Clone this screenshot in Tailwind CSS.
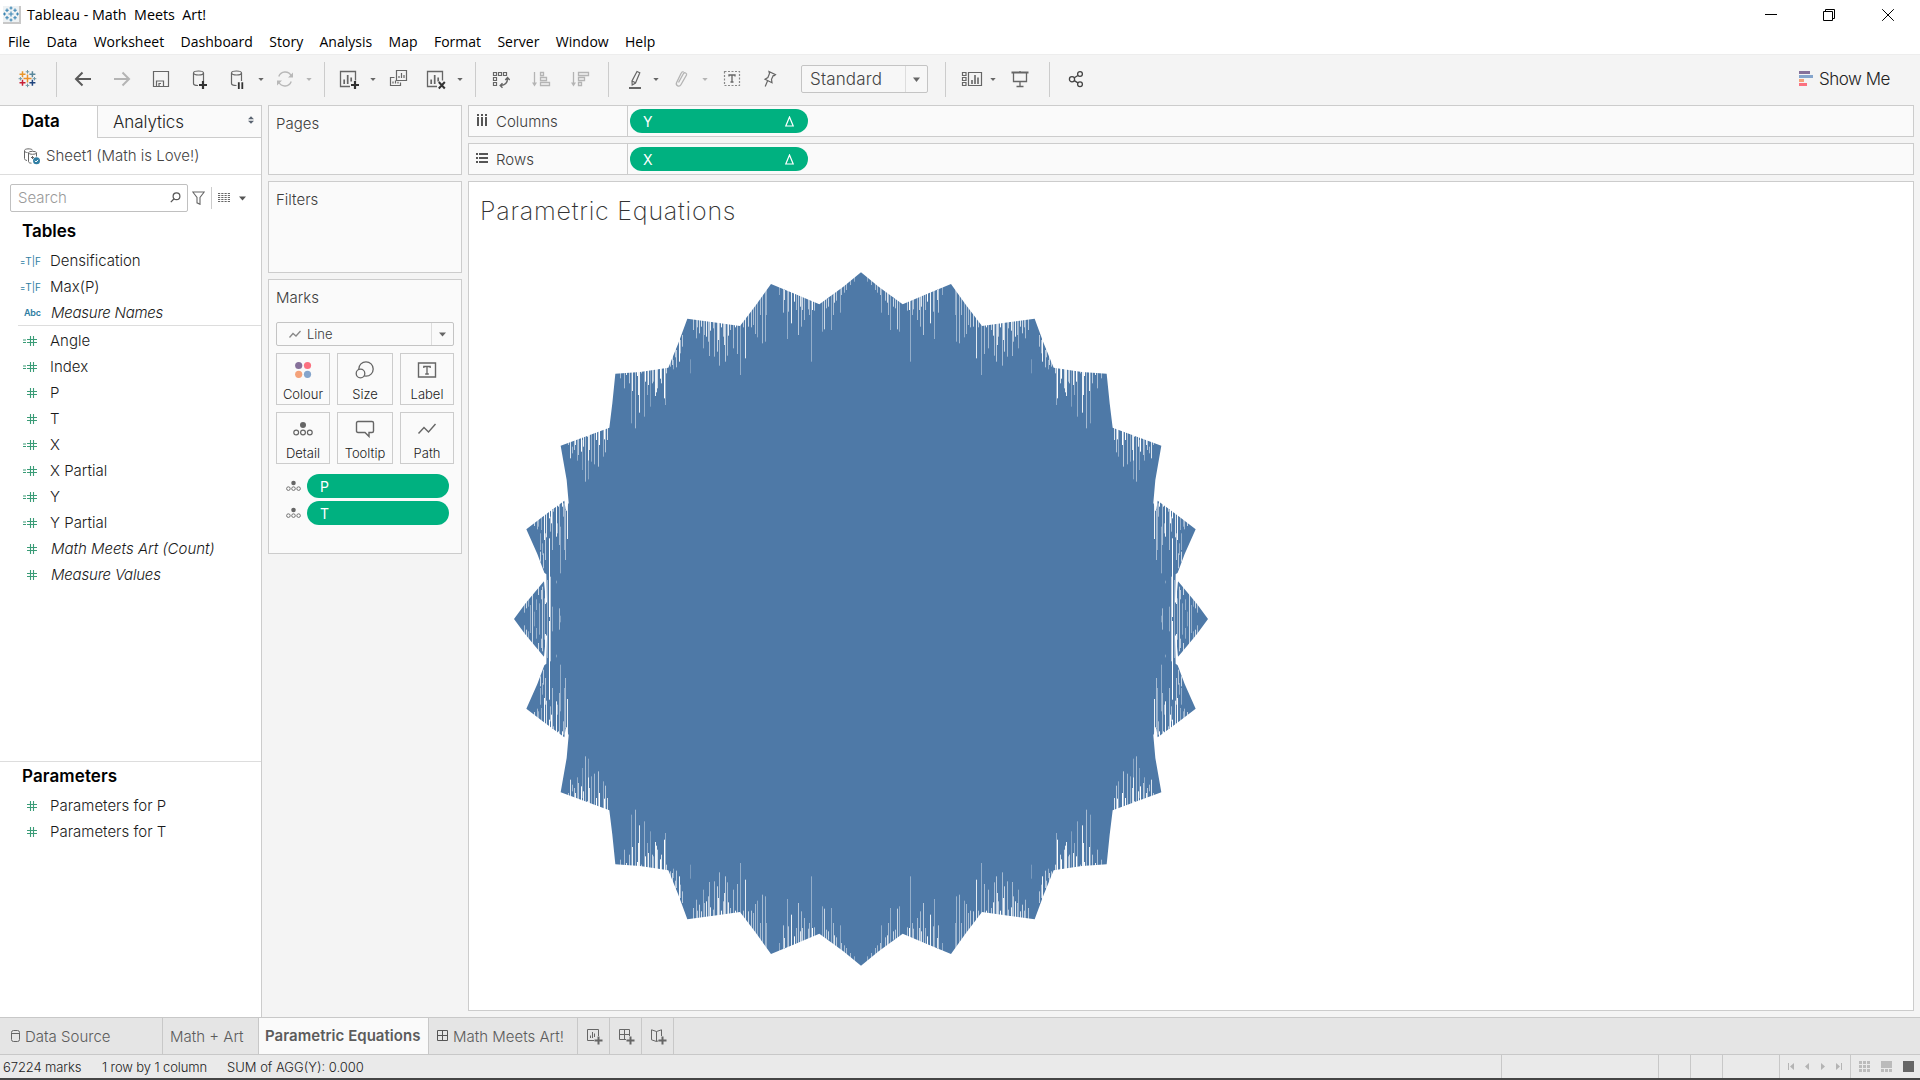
<!DOCTYPE html>
<html lang="en">
<head>
<meta charset="utf-8">
<title>Tableau - Math Meets Art!</title>
<script src="https://cdn.jsdelivr.net/npm/@tailwindcss/browser@4"></script>
</head>
<body class="w-[1920px] h-[1080px] overflow-hidden flex flex-col bg-[#f4f4f4] font-['Inter',sans-serif] font-light text-[15px] text-[#1e1e1e] whitespace-nowrap">

<svg class="hidden">
  <symbol id="caret" viewBox="0 0 6 24"><path d="M.3 11h5.4L3 14z" fill="currentColor"/></symbol>
  <symbol id="num" viewBox="0 0 16 12"><path d="M8.500 1v10M11.500 1v10M5 4.500h10M5 7.500h10" stroke="#3a9c77" stroke-width="1.100"/></symbol>
  <symbol id="calcnum" viewBox="0 0 16 12"><path d="M8.500 1v10M11.500 1v10M5 4.500h10M5 7.500h10M1 5h3M1 7.500h3" stroke="#3a9c77" stroke-width="1.100"/></symbol>
  <symbol id="detail" viewBox="0 0 20 16"><circle cx="10" cy="4" r="3" fill="#666"/><g fill="none" stroke="#666" stroke-width="1.200"><circle cx="3.200" cy="11.500" r="2.400"/><circle cx="10" cy="11.500" r="2.400"/><circle cx="16.800" cy="11.500" r="2.400"/></g></symbol>
</svg>

<!-- Title bar -->
<header class="h-[29px] shrink-0 bg-white flex items-center pl-[3px] font-['Open_Sans',sans-serif] font-normal text-[14.3px] text-black">
  <div class="size-[18px] bg-[#eef2f4] border-r-2 border-b-2 border-[#c8c8c8] shrink-0 mt-px">
    <svg class="size-4" viewBox="0 0 16 16" stroke="#3c86b4" stroke-width="1.100"><path d="M8 5.500v5M5.500 8h5M4 2.500v3.500M2.300 4.200h3.500M12 2.500v3.500M10.300 4.200h3.500M4 10v3.500M2.300 11.800h3.500M12 10v3.500M10.300 11.800h3.500M8 .5v3M6.500 2h3M8 12.500v3M6.500 14h3M1.500 6.500v3M0 8h3M14.500 6.500v3M13 8h3"/></svg>
  </div>
  <span class="ml-[6px] whitespace-pre">Tableau - Math  Meets  Art!</span>
  <svg class="ml-auto mr-[25px] w-[131px] h-[14px]" viewBox="0 0 131 14" fill="none" stroke="#000" stroke-width="1"><path d="M1 6.500h12M59.500 3.500h9v9h-9zM61.500 3.500v-2h9v9h-2"/><path d="M118.200 1.200l11.600 11.600M129.800 1.200l-11.600 11.600"/></svg>
</header>

<!-- Menu bar -->
<nav class="h-[25px] shrink-0 bg-white flex items-center pl-2 gap-[16.300px] font-['Open_Sans',sans-serif] font-normal text-[14px] text-black tracking-[0.02px]">
  <span>File</span><span>Data</span><span>Worksheet</span><span>Dashboard</span><span>Story</span><span>Analysis</span><span>Map</span><span>Format</span><span>Server</span><span>Window</span><span>Help</span>
</nav>

<!-- Toolbar -->
<div class="h-[51px] shrink-0 border-t border-[#ededed] flex items-center text-[#666] [&>svg]:shrink-0 [&>svg]:h-6 [&>i]:w-px [&>i]:h-[35px] [&>i]:bg-[#ccc] [&>i]:shrink-0 pb-[2px]">
  <svg class="ml-[17px] w-5" viewBox="0 0 20 24" stroke-width="1.500">
    <path d="M10.500 7.500v8M6.500 11.500h8" stroke="#eb912b"/><path d="M5.500 4.200v6M2.500 7.200h6" stroke="#e8962c"/><path d="M15.400 4.200v6M12.400 7.200h6" stroke="#59879b"/><path d="M5.500 12.800v6M2.500 15.800h6" stroke="#c72037"/><path d="M15.400 12.800v6M12.400 15.800h6" stroke="#1f447e"/>
    <path d="M10.500 3v3.600M8.700 4.800h3.600M10.500 16.600v3.600M8.700 18.400h3.600M3.400 10v3.400M1.600 11.700h3.600M17.500 10v3.400M15.700 11.700h3.600" stroke="#7199a6" stroke-width="1"/>
  </svg>
  <i class="ml-[19px]"></i>
  <svg class="ml-[17px] w-[18px]" viewBox="0 0 18 24" fill="none" stroke="#5a5a5a" stroke-width="2"><path d="M17 12H2.500M8.500 5.500L2 12l6.500 6.500"/></svg>
  <svg class="ml-[21px] w-[18px]" viewBox="0 0 18 24" fill="none" stroke="#b4b4b4" stroke-width="2"><path d="M1 12h14.500M9.500 5.500L16 12l-6.500 6.500"/></svg>
  <svg class="ml-[21px] w-[18px]" viewBox="0 0 18 24" fill="none" stroke="#666" stroke-width="1.200"><path d="M1.500 4.500h15v15h-15zM4.500 19.500v-5.500h7v5.500M7 19v-2.500h2"/></svg>
  <svg class="ml-[22px] w-4" viewBox="0 0 16 24" fill="none" stroke="#666" stroke-width="1.200"><ellipse cx="6.500" cy="6" rx="5" ry="2"/><path d="M1.500 6v10.500c0 1.200 2 2 4.500 2M11.500 6v8"/><path d="M11 14v8M7 18h8" stroke="#333" stroke-width="2.200"/></svg>
  <svg class="ml-[22px] w-[14px]" viewBox="0 0 14 24" fill="none" stroke="#666" stroke-width="1.200"><ellipse cx="6.500" cy="6" rx="5" ry="2"/><path d="M1.500 6v10.500c0 1.200 2 2 5 2M11.500 6v8"/><path d="M8.800 15.300v6.700M12.300 15.300v6.700" stroke="#333" stroke-width="1.800"/></svg>
  <svg class="ml-[14px] w-1.5"><use href="#caret"/></svg>
  <svg class="ml-3 w-[18px]" viewBox="0 0 18 24" fill="none" stroke="#b8b8b8" stroke-width="1.400"><path d="M2.800 9.500a6.700 6.700 0 0 1 12.300-.8M15.200 14.500a6.700 6.700 0 0 1-12.300.8"/><path d="M17 5.500v5h-5zM1 18.500v-5h5z" fill="#b8b8b8" stroke="none"/></svg>
  <svg class="ml-3 w-1.5 text-[#b4b4b4]"><use href="#caret"/></svg>
  <i class="ml-3"></i>
  <svg class="ml-[14px] w-5" viewBox="0 0 20 24" fill="none" stroke="#666" stroke-width="1.300"><path d="M11 19.500H1.500v-15h15v9"/><path d="M5.200 12.500v4.500M8.700 8v9M12.200 10.500v4" stroke-width="1.700"/><path d="M16 14v8M12 18h8" stroke="#333" stroke-width="2.200"/></svg>
  <svg class="ml-[11px] w-1.5"><use href="#caret"/></svg>
  <svg class="ml-[13px] w-[19px]" viewBox="0 0 19 24" fill="none" stroke="#666" stroke-width="1.200"><path d="M7.500 3.500h10v10h-10zM5.500 10.500h-4v8h10v-3M10 11V9M12.500 11V6M15 11V8M4 16.500v-2M6.500 16.500v-3M9 16.500V14.800"/></svg>
  <svg class="ml-[18px] w-5" viewBox="0 0 20 24" fill="none" stroke="#666" stroke-width="1.300"><path d="M11 19.500H1.500v-15h15v9"/><path d="M5.200 12.500v4.500M8.700 8v9M12.200 10.500v4" stroke-width="1.700"/><path d="M12.800 15l6 6.500M18.800 15l-6 6.500" stroke="#333" stroke-width="2"/></svg>
  <svg class="ml-[11px] w-1.5"><use href="#caret"/></svg>
  <i class="ml-3"></i>
  <svg class="ml-4 w-[18px]" viewBox="0 0 18 24" fill="none" stroke="#666" stroke-width="1.200"><path d="M1.500 5.500h3v3h-3zM6.500 5.500h3v3h-3zM11.500 5.500h3v3h-3zM1.500 10.500h3v3h-3zM1.500 15.500h3v3h-3z"/><path d="M15.500 11c.2 5-2.500 7.200-7 7.500M13.300 13l2.200-2.500 2.200 2.500M10.500 16.200L8.200 18.500l2.300 2.300" stroke-width="1.400"/></svg>
  <svg class="ml-[21px] w-5" viewBox="0 0 20 24" fill="none" stroke="#b4b4b4" stroke-width="1.300"><path d="M3.500 5v12M9.500 5.500h3v3h-3zM9.500 10.500h6v3h-6zM9.500 15.500h9v3h-9z"/><path d="M1 15.500h5l-2.500 4z" fill="#b4b4b4" stroke="none"/></svg>
  <svg class="ml-[19px] w-5" viewBox="0 0 20 24" fill="none" stroke="#b4b4b4" stroke-width="1.300"><path d="M3.500 5v12M8.500 5.500h10v3h-10zM8.500 10.500h6v3h-6zM8.500 15.500h3v3h-3z"/><path d="M1 15.500h5l-2.500 4z" fill="#b4b4b4" stroke="none"/></svg>
  <i class="ml-[18px]"></i>
  <svg class="ml-[19px] w-[14px]" viewBox="0 0 14 24" fill="none" stroke="#666" stroke-width="1.200"><path d="M9 4.500l2.800 1.300L7.500 16l-3.300 2-.2-4zM4 14l3.500 1.800"/><path d="M1 21h12" stroke-width="2"/></svg>
  <svg class="ml-[11px] w-1.5"><use href="#caret"/></svg>
  <svg class="ml-[15px] w-[14px]" viewBox="0 0 14 24" fill="none" stroke="#b4b4b4" stroke-width="1.300"><path d="M4.500 15.500l5-9c.9-1.500 3.800-.4 3 1.500l-5.600 9.800c-1.500 2.500-5.500.8-4.400-2L7 6.500c.7-1.500 1.600-1.800 2.600-1.800"/></svg>
  <svg class="ml-[14px] w-1.5 text-[#b4b4b4]"><use href="#caret"/></svg>
  <svg class="ml-[15px] w-[18px]" viewBox="0 0 18 24" fill="none"><path d="M1.500 4.500h15v14h-15z" stroke="#888" stroke-width="1.200" stroke-dasharray="2 1.500"/><path d="M6 9.500V8h6v1.500M9 8v7M7.500 15h3" stroke="#666" stroke-width="1.300"/></svg>
  <svg class="ml-[21px] w-[15px]" viewBox="0 0 15 24" fill="none" stroke="#666" stroke-width="1.200"><path d="M7 4.500l6.500 3.200-1.200 1-1.100 0-1.700 3.600.5 3.400-7-3.400 2.900-1.800L7.500 6.500zM5.500 14L3.200 19.500"/></svg>
  <div class="ml-6 w-[127px] h-7 shrink-0 border border-[#c4c4c4] rounded-[2px] bg-[#f7f7f7] flex items-center text-[17px] text-[#444] tracking-[0.15px]">
    <span class="pl-2 w-[103px] pt-px">Standard</span><span class="w-px h-[26px] bg-[#ddd]"></span>
    <svg class="ml-[7px] w-[7px] h-[5px]" viewBox="0 0 7 5"><path d="M0 .5h7L3.500 5z" fill="#666"/></svg>
  </div>
  <i class="ml-[17px]"></i>
  <svg class="ml-[15px] w-[22px]" viewBox="0 0 22 24" fill="none" stroke="#666" stroke-width="1.200"><path d="M1.500 5.500h3.500v3H1.500zM1.500 10.500h3.500v3H1.500zM1.500 15.500h3.500v3H1.500zM7.500 5.500h13v13h-13z"/><path d="M11 13v4M14 8v9M17 10.500v6.500" stroke-width="1.600"/></svg>
  <svg class="ml-[7px] w-1.5"><use href="#caret"/></svg>
  <svg class="ml-[15px] w-[18px]" viewBox="0 0 18 24" fill="none" stroke="#666" stroke-width="1.300"><path d="M.5 5.500h17" stroke-width="2"/><path d="M2.500 6v8.500h13V6M9 4v1M9 14.500v5M5.500 19.500h7"/></svg>
  <i class="ml-5"></i>
  <svg class="ml-[18px] w-4" viewBox="0 0 16 24" fill="none" stroke="#444" stroke-width="1.300"><circle cx="4" cy="12.200" r="2.600"/><circle cx="12" cy="7" r="2.400"/><circle cx="12" cy="17.200" r="2.400"/><path d="M6.300 10.800l3.600-2.300M6.300 13.600l3.600 2.300"/></svg>
  <svg class="ml-auto w-[14px]" viewBox="0 0 14 24"><path d="M0 4h11v3H0z" fill="#86719a"/><path d="M0 8h14v3H0z" fill="#85a5cc"/><path d="M0 12h5v3H0z" fill="#f4a27a"/><path d="M0 16h8v3H0z" fill="#fb7180"/></svg>
  <span class="ml-[6px] w-[101px] text-[17px] text-[#222] tracking-[-0.5px] pt-px">Show Me</span>
</div>

<!-- Workspace -->
<main class="flex h-[912px] shrink-0">

  <!-- Data pane -->
  <aside class="w-[262px] shrink-0 bg-white border-t border-r border-[#ccc] flex flex-col">
    <div class="flex h-8 text-[17px]">
      <div class="w-[97px] pl-[22px] pt-[3px] font-semibold text-black">Data</div>
      <div class="flex-1 bg-[#fafafa] border-l border-b border-[#ccc] pl-[15px] pr-[7px] flex items-center justify-between"><span class="tracking-[-0.1px] pt-[2px]">Analytics</span>
        <svg class="w-[6px] h-[8px] -mt-1" viewBox="0 0 6 8"><path d="M0 3.200h6L3 .2zM0 4.800h6L3 7.800z" fill="#5a6472"/></svg></div>
    </div>
    <div class="h-[37px] border-b border-[#ddd] flex items-center pl-6 text-[#444]">
      <svg class="w-4 h-[17px] mr-[6px]" viewBox="0 0 16 17" fill="none" stroke="#666" stroke-width="1"><path d="M8.500 2C7 .3.500.5.500 2.500v8c0 1.200 1 1.700 2.500 2M.5 3c.5 1.200 1.500 1.500 3 1.600"/><ellipse cx="8.500" cy="4.800" rx="4" ry="1.500"/><path d="M4.500 5v8.500c0 1 1 1.600 3 1.700M12.500 5v3.500M7 9.500h3M8.500 8v3"/><circle cx="12.500" cy="12.800" r="3.500" fill="#2f7ea3" stroke="none"/><path d="M10.900 12.800l1.200 1.200 2-2.200" stroke="#fff"/></svg>
      <span class="pt-px">Sheet1 (Math is Love!)</span>
    </div>
    <div class="flex items-center mt-[9px] ml-[10px] h-7">
      <div class="w-[178px] h-7 border border-[#c0c0c0] rounded-[2px] flex items-center justify-between pl-[7px] pr-[6px] text-[#9a9a9a]"><span>Search</span>
        <svg class="size-[11px] -mt-0.5" viewBox="0 0 11 11" fill="none" stroke="#555" stroke-width="1.200"><circle cx="6.500" cy="4.300" r="3.400"/><path d="M3.800 7L.8 10.200"/></svg></div>
      <svg class="ml-1 w-[13px] h-[14px]" viewBox="0 0 13 14" fill="none" stroke="#666" stroke-width="1.100"><path d="M.8 1h11.400L8 6.500v6.800l-3-1.500V6.500z"/></svg>
      <span class="ml-[6px] w-px h-[22px] bg-[#ccc]"></span>
      <svg class="ml-[6px] w-3 h-[10px]" viewBox="0 0 12 10" stroke="#666" stroke-width="1"><path d="M0 .5h12M0 2.500h12M0 4.500h12M0 6.500h12M0 8.500h12" stroke-dasharray="2.200 1.066"/></svg>
      <svg class="ml-[9px] w-[7px] h-[5px]" viewBox="0 0 7 5"><path d="M0 .5h7L3.500 4.500z" fill="#555"/></svg>
    </div>
    <h2 class="mt-[6px] pl-[22px] h-[26px] leading-[27px] text-[17px] font-semibold text-black">Tables</h2>
    <div class="mt-1 text-[#1a1a1a] [&>div]:flex [&>div]:items-center [&>div]:h-[26px]">
      <div><span class="w-[50px] pl-5 text-[10px] font-normal text-[#2f7ea3]"><span class="text-[8px]">=</span>T|F</span>Densification</div>
      <div><span class="w-[50px] pl-5 text-[10px] font-normal text-[#2f7ea3]"><span class="text-[8px]">=</span>T|F</span>Max(P)</div>
      <div class="italic tracking-[-0.25px]"><span class="w-[51px] pl-6 not-italic text-[9px] font-semibold text-[#2f7ea3] tracking-[-0.2px]">Abc</span>Measure Names</div>
    </div>
    <div class="ml-[18px] -mt-px h-px bg-[#ddd]"></div>
    <div class="mt-[2px] text-[#1a1a1a] [&>div]:flex [&>div]:items-center [&>div]:h-[26px] [&_svg]:w-4 [&_svg]:h-3 [&_svg]:ml-[22px] [&_svg]:mr-3">
      <div><svg><use href="#calcnum"/></svg>Angle</div>
      <div><svg><use href="#calcnum"/></svg>Index</div>
      <div><svg><use href="#num"/></svg>P</div>
      <div><svg><use href="#num"/></svg>T</div>
      <div><svg><use href="#calcnum"/></svg>X</div>
      <div><svg><use href="#calcnum"/></svg>X Partial</div>
      <div><svg><use href="#calcnum"/></svg>Y</div>
      <div><svg><use href="#calcnum"/></svg>Y Partial</div>
      <div class="italic"><svg><use href="#num"/></svg><span class="pl-px">Math Meets Art (Count)</span></div>
      <div class="italic tracking-[-0.200px]"><svg><use href="#num"/></svg><span class="pl-px">Measure Values</span></div>
    </div>
    <div class="mt-auto h-[256px] border-t border-[#ddd] text-[#1a1a1a]">
      <h2 class="pl-[22px] h-[31px] leading-[29px] text-[17px] font-semibold text-black tracking-[0.1px]">Parameters</h2>
      <div class="flex items-center h-[26px]"><svg class="w-4 h-3 ml-[22px] mr-3"><use href="#num"/></svg>Parameters for P</div>
      <div class="flex items-center h-[26px]"><svg class="w-4 h-3 ml-[22px] mr-3"><use href="#num"/></svg>Parameters for T</div>
    </div>
  </aside>

  <!-- Cards -->
  <section class="w-[194px] ml-[6px] shrink-0 flex flex-col gap-[6px] text-[#3c3c3c]">
    <div class="h-[70px] border border-[#ccc] bg-[#fafafa] pl-[7px] pt-[7px]">Pages</div>
    <div class="h-[92px] border border-[#ccc] bg-[#fafafa] pl-[7px] pt-[7px]">Filters</div>
    <div class="h-[275px] border border-[#ccc] bg-[#fafafa] pl-[7px] pt-[6px]">
      <div class="leading-6">Marks</div>
      <div class="mt-3 w-[178px] h-6 border border-[#c4c4c4] rounded-[2px] flex items-center text-[13px]">
        <svg class="ml-3 w-3 h-[9px]" viewBox="0 0 12 9" fill="none" stroke="#888" stroke-width="1.300"><path d="M.5 7.500l3.500-4 3 2.500 4.500-5"/></svg>
        <span class="ml-[6px] w-[124px] pt-px">Line</span><span class="w-px h-[22px] bg-[#ddd]"></span>
        <svg class="ml-[7px] w-[7px] h-[5px]" viewBox="0 0 7 5"><path d="M0 .5h7L3.500 4.500z" fill="#666"/></svg>
      </div>
      <div class="mt-[7px] grid grid-cols-[54px_56px_54px] gap-x-[7px] gap-y-[7px] text-[13px] text-[#222] [&>div]:h-[52px] [&>div]:border [&>div]:border-[#ccc] [&>div]:flex [&>div]:flex-col [&>div]:items-center [&>div]:pt-[7px] [&_svg]:w-5 [&_svg]:h-[18px] [&_svg]:mb-[5px] leading-5">
        <div><svg viewBox="0 0 20 18"><circle cx="5.700" cy="4.500" r="3.600" fill="#86719a"/><circle cx="14.500" cy="4.500" r="3.600" fill="#fb7180"/><circle cx="5.700" cy="13.300" r="3.600" fill="#f4a27a"/><circle cx="14.500" cy="13.300" r="3.600" fill="#85a5cc"/></svg>Colour</div>
        <div><svg viewBox="0 0 20 18" fill="none" stroke="#666" stroke-width="1.300"><circle cx="11" cy="8" r="7.200"/><circle cx="5.500" cy="12.500" r="4.300" fill="#fafafa"/></svg>Size</div>
        <div><svg viewBox="0 0 20 18" fill="none" stroke="#666" stroke-width="1.400"><path d="M1.500 2h17v14h-17z"/><path d="M6.800 7V5.500h6.400V7M10 5.500v7.500M8.200 13h3.600" stroke-width="1.300"/></svg>Label</div>
        <div><svg viewBox="0 0 20 18"><use href="#detail" y="1" width="20" height="16"/></svg>Detail</div>
        <div><svg viewBox="0 0 20 18" fill="none" stroke="#666" stroke-width="1.400"><path d="M3 1.500h14q1.500 0 1.500 1.500v8q0 1.500-1.500 1.500h-3v4l-4-4H3q-1.500 0-1.500-1.500V3Q1.500 1.500 3 1.500z"/></svg>Tooltip</div>
        <div><svg viewBox="0 0 20 18" fill="none" stroke="#666" stroke-width="1.400"><path d="M1.500 13.500l5.500-6 4.500 4.500 7-8"/></svg>Path</div>
      </div>
      <div class="mt-[10px] flex flex-col gap-[3px] pl-[10px] text-white font-normal text-[14px] [&>div]:flex [&>div]:items-center [&_svg]:w-[15px] [&_svg]:h-3 [&_span]:ml-[6px] [&_span]:w-[142px] [&_span]:h-6 [&_span]:rounded-full [&_span]:bg-[#00b180] [&_span]:pl-[13px] leading-[25px]">
        <div><svg><use href="#detail"/></svg><span>P</span></div>
        <div><svg><use href="#detail"/></svg><span>T</span></div>
      </div>
    </div>
  </section>

  <!-- Shelves and view -->
  <section class="w-[1446px] ml-[6px] shrink-0 flex flex-col gap-[6px] text-[#3c3c3c]">
    <div class="h-8 border border-[#ccc] bg-[#fafafa] flex items-center">
      <svg class="ml-[7px] size-3 -mt-0.5" viewBox="0 0 12 12" fill="#555"><path d="M1 0h2v2H1zM5 0h2v2H5zM9 0h2v2H9zM1 3h2v9H1zM5 3h2v9H5zM9 3h2v9H9z"/></svg>
      <span class="ml-2 w-[131px] pt-[2px]">Columns</span><span class="w-px h-[30px] bg-[#ccc]"></span>
      <div class="ml-[2px] w-[178px] h-6 rounded-full bg-[#00b180] text-white font-normal text-[14px] flex items-center justify-between pl-[13px] pr-[14px]">Y<svg class="w-[9px] h-[11px]" viewBox="0 0 9 11" fill="none" stroke="#fff" stroke-width="1.200"><path d="M4.500 1L8.200 10H.8z"/></svg></div>
    </div>
    <div class="h-8 border border-[#ccc] bg-[#fafafa] flex items-center">
      <svg class="ml-[7px] size-3 -mt-0.5" viewBox="0 0 12 12" fill="#555"><path d="M0 1h2v2H0zM0 5h2v2H0zM0 9h2v2H0zM3 1h9v2H3zM3 5h9v2H3zM3 9h9v2H3z"/></svg>
      <span class="ml-2 w-[131px] pt-[2px]">Rows</span><span class="w-px h-[30px] bg-[#ccc]"></span>
      <div class="ml-[2px] w-[178px] h-6 rounded-full bg-[#00b180] text-white font-normal text-[14px] flex items-center justify-between pl-[13px] pr-[14px]">X<svg class="w-[9px] h-[11px]" viewBox="0 0 9 11" fill="none" stroke="#fff" stroke-width="1.200"><path d="M4.500 1L8.200 10H.8z"/></svg></div>
    </div>
    <div class="h-[830px] border border-[#ccc] bg-white">
      <h1 class="h-[58px] leading-[59px] pl-[11px] text-[25px] font-extralight tracking-[0.780px] text-[#333]">Parametric Equations</h1>
      <svg class="ml-[45px] mt-[31px] w-[694px] h-[696px]" viewBox="514 271 694 696">
        <defs><g id="quarter"><path fill="#4e79a7" d="M42 1137L75 1092L128 1028L132 1024L136 1065L138 1090L141 1085L139 1003L133 998L112 942L79 868L128 830L193 782L197 810L206 788L200 720L182 617L245 594L328 563L337 490L346 401L420 396L505 383L535 310L562 236L640 247L720 258L768 195L813 132L880 160L958 193L1030 140L1083 97V1137H42z"/></g></defs>
        <use href="#quarter" transform="translate(500 240) scale(.333333)"/>
        <use href="#quarter" transform="translate(1222 240) scale(-.333333 .333333)"/>
        <use href="#quarter" transform="translate(500 998) scale(.333333 -.333333)"/>
        <use href="#quarter" transform="translate(1222 998) scale(-.333333)"/>
      </svg>
    </div>
  </section>
</main>

<!-- Sheet tabs -->
<div class="h-[38px] shrink-0 border-y border-[#c8c8c8] bg-[#e5e5e5] flex text-[#5c5c5c] [&>div]:border-r [&>div]:border-[#c8c8c8] [&>div]:flex [&>div]:items-center [&>div]:h-9 [&>div]:pt-[2px]">
  <div class="w-[163px] pl-[11px]"><svg class="w-[9px] h-3 mr-[5px] -mt-[3px]" viewBox="0 0 9 12" fill="none" stroke="#666"><rect x=".5" y=".5" width="8" height="11" rx="2"/><path d="M.5 3.500h8"/></svg>Data Source</div>
  <div class="w-24 pl-[7px]">Math + Art</div>
  <div class="w-[170px] pl-[6px] bg-[#fafafa] font-semibold pb-[2px] tracking-[0.03px]">Parametric Equations</div>
  <div class="w-[149px] pl-2"><svg class="size-[11px] mr-[5px] -mt-[3px]" viewBox="0 0 11 11" fill="none" stroke="#555"><path d="M.5.5h10v10H.5zM5.500.5v10M.5 5.500h10"/></svg>Math Meets Art!</div>
  <div class="w-8 pl-[9px]"><svg class="w-4 h-4" viewBox="0 0 16 16" fill="none" stroke="#666"><path d="M7 11.500H.5V.5h11V7M3.500 9V6.500M5.500 9V3M7.500 8V4.500"/><path d="M11.500 7.500v8M7.500 11.500h8" stroke-width="2"/></svg></div>
  <div class="w-8 pl-[9px]"><svg class="w-4 h-4" viewBox="0 0 16 16" fill="none" stroke="#666"><path d="M7 10.500H.5V.5h10V7M5.500.5v10M.5 5.500h10"/><path d="M11.500 7.500v8M7.500 11.500h8" stroke-width="2"/></svg></div>
  <div class="w-8 pl-[9px]"><svg class="w-4 h-4" viewBox="0 0 16 16" fill="none" stroke="#666"><path d="M10.500 7V.8L5.500 2.500.5.8v10l5 1.700V2.500M5.500 12.500l2-.7"/><path d="M11.500 7.500v8M7.500 11.500h8" stroke-width="2"/></svg></div>
</div>

<!-- Status bar -->
<footer class="h-[25px] shrink-0 bg-[#eaeaea] border-b-2 border-[#454545] flex items-center text-[13px] text-[#222]">
  <span class="pl-[3px] w-[102px] tracking-[-0.1px] pt-[2px]">67224 marks</span><span class="w-[125px] tracking-[-0.1px] pt-[2px]">1 row by 1 column</span><span class="w-[1274px] pt-[2px]">SUM of AGG(Y): 0.000</span>
  <span class="w-[157px] h-full border-l border-[#c8c8c8]"></span>
  <span class="w-8 h-full border-l border-[#c8c8c8]"></span>
  <span class="w-8 h-full border-l border-[#c8c8c8]"></span>
  <span class="w-[57px] h-full border-l border-[#c8c8c8]"></span>
  <span class="w-[71px] h-full border-l border-[#c8c8c8] flex items-center pl-2"><svg class="w-[55px] h-[7px]" viewBox="0 0 55 7" fill="#b4b4b4"><path d="M0 0h1v7H0zM6 0v7L2 3.500zM21 0v7l-4-3.500zM33 0v7l4-3.500zM48 0v7l4-3.500zM53 0h1v7h-1z"/></svg></span>
  <span class="w-[70px] h-full border-l border-[#c8c8c8] flex items-center pl-2"><svg class="w-[55px] h-[11px]" viewBox="0 0 55 11" fill="#bbb"><path d="M0 0h3v3H0zM4 0h3v3H4zM8 0h3v3H8zM0 4h3v3H0zM4 4h3v3H4zM8 4h3v3H8zM0 8h3v3H0zM4 8h3v3H4zM8 8h3v3H8zM22 0h11v7H22zM22 8h3v3h-3zM26 8h3v3h-3zM30 8h3v3h-3z"/><path d="M44 0h11v11H44z" fill="#666"/></svg></span>
</footer>

<script>
// Gaps between the curve's line segments: [x, top, bottom, strength], mirrored into all four quarters.
const gaps = [
 [72,1090,1118,.5],[78,1080,1105,.7],[84,1078,1100,.4],[90,1095,1137,.4],[98,1060,1137,.7],[103,1115,1137,.3],[108,1078,1110,.4],[114,1030,1065,.7],[117,1090,1137,.4],[123,1050,1078,.6],[128,1040,1137,.65],[133,1075,1137,.4],
 [137,1003,1092,.95],[143,1020,1137,.4],[149,895,1131,1],[152,1010,1137,.6],[158,1100,1137,.4],[169,1022,1030,.3],[178,1105,1137,.5],[181,1127,1137,.3],
 [102,830,858,.7],[111,830,868,.5],[114,830,860,.4],[120,880,930,.4],[120,935,965,.7],[123,820,870,.4],[126,910,945,.4],[129,940,985,.6],[133,800,900,.95],[136,880,960,.6],[138,800,892,.8],[147,790,835,1],[151,830,875,.5],[154,800,850,1],[157,810,930,.5],[160,790,815,.6],[169,790,890,.95],[172,850,880,.5],[175,780,800,1],[178,790,915,.5],[181,860,1000,.4],[187,760,800,1],[190,790,830,.5],[193,790,930,.4],[196,810,960,.5],[199,770,812,1],[203,780,897,.9],
 [204,590,615,.6],[211,590,655,.8],[216,620,640,.5],[223,590,630,.6],[226,590,615,.9],[231,590,662,.4],[234,580,645,.6],[243,580,635,1],[247,600,690,.3],[249,580,620,.9],[256,570,725,.5],[261,570,590,1],[265,560,662,.9],[268,560,630,.8],[265,662,718,.35],[274,560,665,.4],[283,560,673,.5],[289,560,600,1],[294,550,680,.6],[298,550,615,1],[310,550,650,.4],[313,550,598,1],[317,550,637,.6],[321,550,600,.8],
 [361,380,415,.5],[373,380,445,.5],[379,380,405,.9],[388,380,430,.6],[395,380,550,.35],[397,380,453,.9],[406,380,565,.5],[412,380,408,1],[415,380,465,.9],[418,380,518,.9],[424,380,400,.6],[433,380,530,.4],[436,380,425,1],[442,380,465,.4],[445,370,435,.9],[451,370,500,.3],[457,370,430,.7],[460,370,425,.5],[466,370,468,.9],[469,370,457,.9],[472,370,445,.7],[481,370,416,1],[484,370,430,.8],[493,370,475,1],[496,370,495,.4],[500,370,400,.7],
 [511,350,380,.6],[517,345,375,.7],[520,360,388,.4],[526,310,352,.6],[529,330,382,.6],[538,290,365,.95],[541,300,340,.5],[547,285,320,.6],
 [571,358,400,.25],[580,225,270,.6],[589,225,295,.5],[592,225,262,.6],[598,225,280,.7],[604,225,260,.8],[610,225,325,.4],[613,225,285,.5],[619,225,290,.9],[624,225,305,.6],[628,225,348,.5],[631,225,272,.9],[640,225,265,.6],[643,225,350,.5],[652,225,335,.7],[655,225,300,.9],[658,225,377,.5],[664,225,262,1],[670,240,290,.6],[673,240,315,.8],[676,240,365,.6],[681,240,347,.5],[684,240,287,.9],[691,240,270,.6],[700,240,325,.5],[706,240,262,1],[711,240,342,.5],[721,240,405,.4],
 [729,225,262,.6],[736,200,355,.85],[745,205,260,.7],[753,200,262,.6],[760,190,255,.5],[766,180,282,.5],[772,180,292,.4],[780,170,225,.5],[787,165,310,.5],[796,150,305,.45],[799,150,225,.4],
 [837,120,165,.4],[850,120,218,.6],[853,150,180,.8],[862,150,297,.4],[866,150,215,.6],[873,150,250,.9],[883,150,185,1],[889,150,210,.5],[895,160,285,.6],[900,160,200,.8],[904,160,260,.5],[907,165,210,.7],[914,165,240,.5],[925,170,208,.6],[928,180,225,.5],[934,180,365,.4],[936,180,210,1],[944,180,212,.6],
 [968,180,275,.4],[973,175,268,.7],[979,170,205,.6],[985,175,200,.7],[995,155,270,.4],[1000,150,225,.5],[1004,150,188,.8],[1010,150,182,.6],[1021,140,218,.4],[1025,140,165,.6],[1033,125,158,.5],[1039,125,150,.5],[1050,118,135,.5],[1064,100,125,.4]
];
const NS = 'http://www.w3.org/2000/svg', q = document.getElementById('quarter');
for (const [x, a, b, s] of gaps) {
  const r = document.createElementNS(NS, 'rect');
  r.setAttribute('x', Math.floor(x / 3) * 3);
  r.setAttribute('y', a);
  r.setAttribute('width', 3);
  r.setAttribute('height', b - a);
  r.setAttribute('fill', '#fff');
  r.setAttribute('fill-opacity', s);
  q.append(r);
}
</script>
</body>
</html>
